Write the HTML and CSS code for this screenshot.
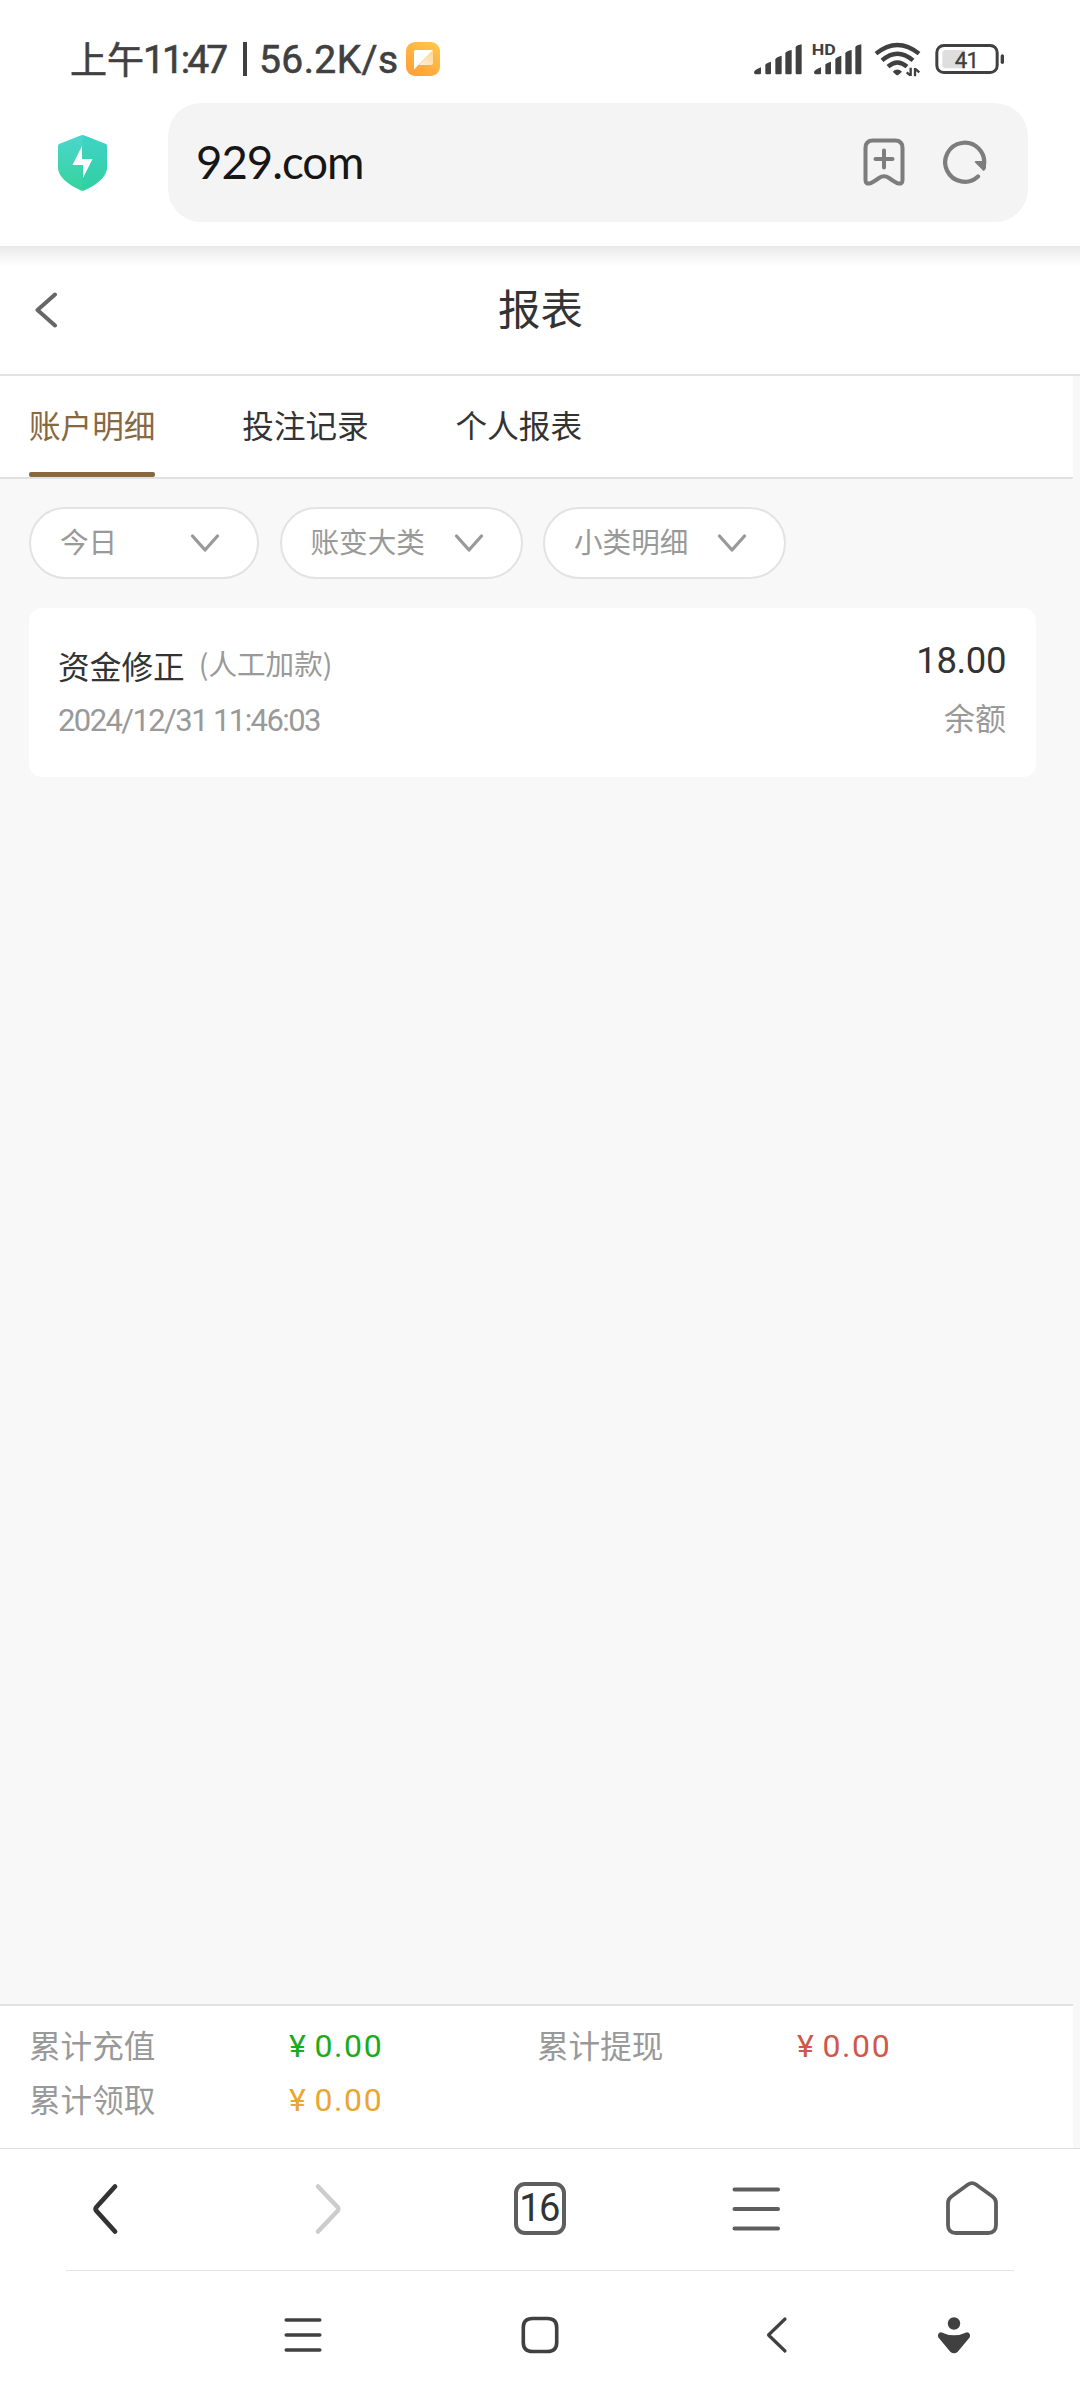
FILE: index.html
```html
<!DOCTYPE html>
<html lang="zh-CN">
<head>
<meta charset="utf-8">
<title>报表</title>
<link rel="stylesheet" href="styles.css">
</head>
<body>
<div class="screen">
  <div class="status">
    <div class="status-left">
      <span class="status-cjk">上午</span><span class="status-time">11:47</span><span class="status-sep"></span><span class="status-speed">56.2K/s</span>
      <svg class="app-badge" width="34" height="34" viewBox="0 0 34 34">
        <defs>
          <linearGradient id="badge" x1="1" y1="0" x2="0.3" y2="1"><stop offset="0" stop-color="#ffc94f"/><stop offset="1" stop-color="#ffa238"/></linearGradient>
          <linearGradient id="fold" x1="1" y1="0" x2="0.3" y2="1"><stop offset="0" stop-color="#fff" stop-opacity=".35"/><stop offset="1" stop-color="#fff" stop-opacity=".8"/></linearGradient>
        </defs>
        <rect width="34" height="34" rx="9" fill="url(#badge)"/>
        <path d="M27 8V21a2 2 0 0 1-2 2H13z" fill="url(#fold)"/>
        <path d="M9.500 8H27L8 27.500V9.500A1.500 1.500 0 0 1 9.500 8z" fill="#fff"/>
      </svg>
    </div>
    <div class="status-right">
      <svg width="108" height="36" viewBox="39 36 324 108" fill="#404040">
        <path d="M39 127q1-8 21-15v18q0 3-3 3H44q-5 0-5-6zM73 104q2-5 17-9v35q0 3-3 3H76q-3 0-3-3zM103 87q3-6 19-10v53q0 3-3 3h-13q-3 0-3-3zM133 69q4-6 19-9v70q0 3-3 3h-13q-3 0-3-3zM164 51q4-6 18-8v87q0 3-3 3h-12q-3 0-3-3z"/>
        <path d="M219 127q1-8 21-15v18q0 3-3 3h-13q-5 0-5-6zM253 104q2-5 17-9v35q0 3-3 3h-11q-3 0-3-3zM283 87q3-6 18-10v53q0 3-3 3h-12q-3 0-3-3zM313 69q4-6 19-9v70q0 3-3 3h-13q-3 0-3-3zM343 51q4-6 18-8v87q0 3-3 3h-12q-3 0-3-3z"/>
        <text class="hd" x="212" y="75" textLength="72" lengthAdjust="spacingAndGlyphs">HD</text>
      </svg>
      <svg class="wifi" width="48" height="36" viewBox="400 36 144 108" fill="none" stroke="#404040" stroke-width="13">
        <path d="M406 71Q470 19 535 71"/>
        <path d="M424 91Q470 51 517 91"/>
        <path d="M442 110Q470 85 499 110"/>
        <path d="M456 125q14-13 28 0l-10 9q-4 4-8 0z" fill="#404040" stroke="none"/>
        <path d="M510 113v25M498 127l11 9M523 139v-25M523 116l13 11" stroke-width="7"/>
      </svg>
      <svg class="battery" width="70" height="36" viewBox="584 36 210 108">
        <rect x="589.500" y="46.500" width="181" height="81" rx="21" fill="#fff" stroke="#404040" stroke-width="9"/>
        <path d="M616 60h57v55h-57q-10 0-10-10V70q0-10 10-10z" fill="#dedede"/>
        <rect x="781" y="73" width="10" height="29" rx="5" fill="#404040"/>
        <text class="battery-text" x="643" y="113" textLength="73">41</text>
      </svg>
    </div>
  </div>

  <div class="address">
    <svg width="49" height="56" viewBox="0 0 49 56">
      <defs><linearGradient id="shield" x1="0" y1="0" x2="0" y2="1"><stop offset="0" stop-color="#4cd6cc"/><stop offset="1" stop-color="#35d39e"/></linearGradient></defs>
      <path d="M22.500.500q2-1 4 0L48 9q1 .5 1 2v23Q47 46 26 55.500q-1.500.6-3 0Q2 46 0 34V11q0-1.500 1-2z" fill="url(#shield)"/>
      <path d="M24.500 0q1 0 2 .5L48 9q1 .5 1 2v23Q47 46 26 55.500l-1.500.3z" fill="#1cc9b0" opacity=".22"/>
      <path d="M24 11v13h10.500L25 43V30H14.500z" fill="#fff"/>
    </svg>
    <div class="url-box">
      <span class="url">929.com</span>
      <svg width="42" height="48" viewBox="0 0 42 48" fill="none" stroke="#7d7d7d" stroke-width="4" stroke-linecap="round" stroke-linejoin="round">
        <path d="M10 2.500h22q7.500 0 7.500 7.500v32q0 4-4 3.500Q33 45 26 40q-5-3.500-10 0-7 5-9.500 5.500-4 .5-4-3.500V10q0-7.500 7.500-7.500z"/>
        <path d="M21 12.500v17M12.500 21h17"/>
      </svg>
      <svg class="reload" width="44" height="44" viewBox="0 0 44 44">
        <path d="M35 36.500A19.500 19.500 0 1 1 41 25" fill="none" stroke="#7d7d7d" stroke-width="4.200" stroke-linecap="round"/>
        <path d="M33 21h10v7q-2 5-4 1.500l-7-7q-1-1.500 1-1.500z" fill="#7d7d7d"/>
      </svg>
    </div>
  </div>

  <main class="page">
    <header class="title-bar">
      <svg width="24" height="36" viewBox="0 0 24 36" fill="none" stroke="#666" stroke-width="4" stroke-linecap="round" stroke-linejoin="round"><path d="M21 2.500L3.500 18 21 33.500"/></svg>
      <h1 class="title">报表</h1>
    </header>
    <nav class="tabs">
      <span class="tab tab-active">账户明细</span>
      <span class="tab">投注记录</span>
      <span class="tab">个人报表</span>
    </nav>
    <div class="filters">
      <div class="filter filter-day"><span>今日</span><svg class="chev" viewBox="0 0 30 20"><path d="M2.500 3L15 17 27.500 3"/></svg></div>
      <div class="filter"><span>账变大类</span><svg class="chev" viewBox="0 0 30 20"><path d="M2.500 3L15 17 27.500 3"/></svg></div>
      <div class="filter"><span>小类明细</span><svg class="chev" viewBox="0 0 30 20"><path d="M2.500 3L15 17 27.500 3"/></svg></div>
    </div>
    <section class="record">
      <div class="record-main">
        <div class="record-name">资金修正<span class="record-kind">(人工加款)</span></div>
        <div class="record-date">2024/12/31 11:46:03</div>
      </div>
      <div class="record-side">
        <div class="record-amount">18.00</div>
        <div class="record-label">余额</div>
      </div>
    </section>
    <section class="totals">
      <span class="total-label">累计充值</span><span class="total-value green"><span class="yen">¥</span>0.00</span>
      <span class="total-label">累计提现</span><span class="total-value red"><span class="yen">¥</span>0.00</span>
      <span class="total-label">累计领取</span><span class="total-value amber"><span class="yen">¥</span>0.00</span>
    </section>
  </main>

  <nav class="browser-nav">
    <svg width="60" height="60" viewBox="-30 -30 60 60" fill="none" stroke="#333" stroke-width="4.800" stroke-linecap="round" stroke-linejoin="round"><path d="M7-22.500L-11.500-2q-1.600 2 0 4L7 22.500"/></svg>
    <svg width="60" height="60" viewBox="-30 -30 60 60" fill="none" stroke="#ccc" stroke-width="4.500" stroke-linecap="round" stroke-linejoin="round"><path d="M-6-22.500L13.500-2q1.600 2 0 4L-6 22.500"/></svg>
    <span class="tab-count">16</span>
    <svg width="60" height="60" viewBox="-30 -30 60 60" fill="none" stroke="#5e5e5e" stroke-width="4" stroke-linecap="round"><path d="M-21.500-19.500h43.500M-21.500 0h43.500M-21.500 19.500h43.500"/></svg>
    <svg width="60" height="60" viewBox="-30 -30 60 60" fill="none" stroke="#5e5e5e" stroke-width="3.800" stroke-linejoin="round"><path d="M-4-24.500q4-2.800 8 0L20.500-12.500Q24-10 24-6V16q0 8-8 8h-32q-8 0-8-8V-6q0-4 3.500-6.500z"/></svg>
  </nav>
  <div class="system-nav">
    <svg class="sys-menu" width="40" height="40" viewBox="-20 -20 40 40" fill="none" stroke="#404040" stroke-width="3.500" stroke-linecap="round"><path d="M-16.800-15h33.600M-16.800 0h33.600M-16.800 15h33.600"/></svg>
    <svg class="sys-home" width="40" height="40" viewBox="-20 -20 40 40" fill="none" stroke="#404040" stroke-width="3.600"><path d="M-7.500-16.500h15Q16.700-16.500 16.700-7.500v15Q16.700 16.500 7.500 16.500h-15Q-16.700 16.500-16.700 7.500v-15Q-16.700-16.500-7.500-16.500z"/></svg>
    <svg class="sys-back" width="40" height="40" viewBox="-20 -20 40 40" fill="none" stroke="#404040" stroke-width="3.200" stroke-linecap="round" stroke-linejoin="round"><path d="M8-16L-8.500 0 8 16"/></svg>
    <svg class="sys-drop" width="40" height="40" viewBox="-20 -20 40 40" fill="#404040"><circle cy="-11.500" r="6.200"/><path d="M-13-2.800Q0 3.400 13-2.800q4 .8 2.800 5L3.500 17q-3.500 2.600-7 0L-15.800 2.200q-1.200-4.200 2.800-5z"/></svg>
  </div>
</div>
</body>
</html>
```
FILE: styles.css
```css
* { box-sizing: border-box; }
body {
  margin: 0;
  background: #fff;
  font-family: "Noto Sans CJK SC", sans-serif;
}
svg { display: block; flex: none; }
.screen {
  width: 1080px;
  height: 2400px;
  display: flex;
  flex-direction: column;
  overflow: hidden;
}

.status {
  height: 103px;
  padding: 41px 75px 26px 70px;
  display: flex;
  justify-content: space-between;
}
.status-left {
  height: 38px;
  display: flex;
  align-items: center;
  color: #404040;
  font: 400 39px/36px Roboto, sans-serif;
  -webkit-text-stroke: 0.600px #404040;
  white-space: nowrap;
}
.status-cjk {
  width: 73px;
  margin-top: -4px;
  font: 400 37px/36px "Noto Sans CJK SC", sans-serif;
}
.status-time { width: 100px; letter-spacing: -3px; }
.status-sep { width: 4px; height: 34px; margin-top: -2px; background: #404040; }
.status-speed { width: 157px; padding-left: 12px; letter-spacing: 0.400px; }
.app-badge { margin: -2px 0 0 2px; }
.status-right { margin-top: 1px; height: 36px; display: flex; align-items: center; }
.hd { font: 700 43px Roboto, sans-serif; }
.wifi { margin-left: 12px; }
.battery { margin-left: 13px; }
.battery-text { font: 400 67px Roboto, sans-serif; fill: #404040; stroke: #404040; stroke-width: 1px; }

.address {
  height: 143px;
  padding: 0 52px 24px 58px;
  display: flex;
  align-items: center;
}
.url-box {
  width: 860px;
  height: 119px;
  margin-left: 61px;
  padding: 0 41px 1px 28px;
  border-radius: 33px;
  background: #f4f4f4;
  display: flex;
  align-items: center;
}
.url {
  flex: 1;
  margin-top: -1px;
  font: 400 45.500px/60px Lato, sans-serif;
  letter-spacing: -1px;
  color: #161616;
}
.reload { margin-left: 38px; }

.page {
  height: 1902px;
  background: #f8f8f8;
  display: flex;
  flex-direction: column;
}
.title-bar {
  height: 130px;
  padding: 0 34px;
  border-bottom: 2px solid #e1e1e1;
  background: linear-gradient(#e9e9e9, #f6f6f6 11px, #fff 21px);
  display: grid;
  grid-template-columns: 24px 1fr 24px;
  align-items: center;
}
.title {
  margin: -7px 0 0 1px;
  font-size: 42.500px;
  line-height: 60px;
  font-weight: 400;
  color: #333;
  text-align: center;
}
.tabs {
  width: 1073px;
  height: 103px;
  padding-left: 28px;
  border-bottom: 2px solid #e1e1e1;
  background: #fff;
  display: flex;
  gap: 86.300px;
}
.tab {
  width: 127px;
  height: 101px;
  padding: 24px 0 0 1px;
  font-size: 31.600px;
  line-height: 48px;
  color: #333;
  white-space: nowrap;
}
.tab-active {
  display: flex;
  flex-direction: column;
  justify-content: space-between;
  color: #876840;
}
.tab-active::after {
  content: "";
  height: 5px;
  border-radius: 2px;
  background: #876840;
}
.filters {
  padding: 28px 29px 0;
  display: flex;
  gap: 20.500px;
}
.filter {
  width: 243px;
  height: 72px;
  padding: 0 37px 0 29px;
  border: 2px solid #e3e3e3;
  border-radius: 36px;
  background: #fff;
  display: flex;
  align-items: center;
  justify-content: space-between;
  font-size: 28.600px;
  line-height: 44px;
  color: #999;
}
.filter span { margin-top: -4px; }
.filter-day { width: 230px; }
.chev {
  width: 30px;
  height: 20px;
  fill: none;
  stroke: #999;
  stroke-width: 3.300px;
  stroke-linecap: round;
  stroke-linejoin: round;
}
.record {
  width: 1007px;
  height: 169px;
  margin: 29px 0 0 29px;
  padding: 30px 30px 0 29px;
  border-radius: 13px;
  background: #fff;
  display: flex;
  justify-content: space-between;
}
.record-name {
  height: 54px;
  display: flex;
  align-items: center;
  font-size: 31.700px;
  line-height: 48px;
  color: #333;
}
.record-kind {
  margin: -4px 0 0 14px;
  font-size: 28.600px;
  color: #999;
}
.record-date {
  font: 400 31px/58px Roboto, sans-serif;
  letter-spacing: -1.600px;
  color: #999;
}
.record-side { text-align: right; }
.record-amount {
  height: 54px;
  font: 400 36.500px/46px Roboto, sans-serif;
  letter-spacing: -0.400px;
  color: #333;
}
.record-label {
  font-size: 31px;
  line-height: 50px;
  color: #999;
}
.totals {
  width: 1073px;
  height: 144px;
  margin-top: auto;
  padding: 12px 0 0 29px;
  border-top: 2px solid #e1e1e1;
  background: #fff;
  display: grid;
  grid-template-columns: 260px 248px 260px 248px;
  grid-auto-rows: 54px;
}
.total-label {
  font-size: 31.600px;
  line-height: 53px;
  color: #999;
}
.total-value {
  font: 400 32px/56px Roboto, sans-serif;
  letter-spacing: 1.600px;
}
.yen { display: inline-block; width: 25.500px; }
.green { color: #1aad19; }
.red { color: #d0574a; }
.amber { color: #eaa632; }

.browser-nav {
  height: 123px;
  padding-bottom: 3px;
  border-top: 1px solid #dedede;
  display: grid;
  grid-template-columns: repeat(5, 216px);
  place-items: center;
  background: #fff;
}
.tab-count {
  width: 52px;
  height: 53px;
  border: 4px solid #5e5e5e;
  border-radius: 11px;
  font: 400 38px/45px Roboto, sans-serif;
  letter-spacing: -1.500px;
  text-align: center;
  text-indent: -2px;
  color: #333;
}
.system-nav {
  height: 129px;
  margin: -1px 66px 0;
  border-top: 1px solid #e2e2e2;
  display: grid;
  grid-template-columns: 118px 237px 237px 237px 118px;
  place-items: center;
}
.sys-menu { grid-column: 2; }
```
